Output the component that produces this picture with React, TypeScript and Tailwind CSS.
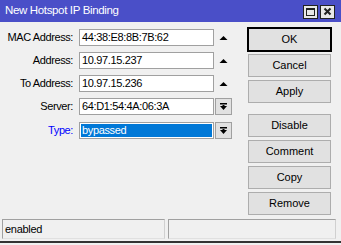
import React from "react";

const font = { fontFamily: '"Liberation Sans", Arial, sans-serif' };

function UpArrow() {
  return (
    <svg width="17" height="17" viewBox="0 0 17 17">
      <polygon points="4.5,11 8.5,7 12.5,11" fill="#000" />
    </svg>
  );
}

function DropIcon() {
  return (
    <svg width="9" height="9" viewBox="0 0 9 9">
      <rect x="1" y="1" width="7" height="1.5" fill="#000" />
      <polygon points="1,4 8,4 4.5,8" fill="#000" />
      <rect x="3.5" y="3" width="2" height="2" fill="#000" />
    </svg>
  );
}

function Row({
  label,
  value,
  blue,
  selected,
  extra,
}: {
  label: string;
  value: string;
  blue?: boolean;
  selected?: boolean;
  extra: "up" | "drop";
}) {
  return (
    <div className="flex items-center h-[17px]">
      <div
        className={`w-[73px] text-right text-[11px] leading-[17px] tracking-[-0.4px] ${
          blue ? "text-[#0000ff]" : "text-black"
        }`}
      >
        {label}
      </div>
      <div className="ml-[6px] w-[135px] h-[17px] border border-[#a0a0a0] bg-white px-[1px] flex items-center">
        <div
          className={`text-[11px] leading-[13px] tracking-[-0.35px] ${
            selected ? "bg-[#0078d7] text-white w-full h-[13px]" : "text-black"
          } pl-[1px]`}
        >
          {value}
        </div>
      </div>
      {extra === "up" ? (
        <div className="ml-[1px] w-[17px] h-[17px] flex items-center justify-center">
          <UpArrow />
        </div>
      ) : (
        <div className="ml-[1px] w-[17px] h-[17px] border border-[#a0a0a0] bg-[#e1e1e1] flex items-center justify-center">
          <DropIcon />
        </div>
      )}
    </div>
  );
}

function Btn({ label, ok }: { label: string; ok?: boolean }) {
  return (
    <div
      className={`w-[83px] h-[23px] flex items-center justify-center bg-[#e1e1e1] border text-[11px] text-black ${
        ok ? "border-black outline outline-1 outline-black" : "border-[#adadad]"
      }`}
    >
      {label}
    </div>
  );
}

export default function App() {
  return (
    <div className="w-[341px] h-[245px] bg-[#f0f0f0] flex flex-col overflow-hidden" style={font}>
      <div className="h-[22px] bg-[#4a4fc8] flex items-center pl-[5px] pr-[6px]">
        <div className="text-white text-[11.5px] tracking-[-0.35px] flex-1">New Hotspot IP Binding</div>
        <div className="flex gap-[2px] mt-[1px]">
          <div className="w-[15px] h-[14px] border border-[#222] bg-[#e8e8e8] flex items-center justify-center">
            <div className="w-[9px] h-[8px] border border-[#222] border-t-2" />
          </div>
          <div className="w-[15px] h-[14px] border border-[#222] bg-[#e8e8e8] flex items-center justify-center">
            <svg width="9" height="9" viewBox="0 0 9 9">
              <path d="M1.5 1.5 L7.5 7.5 M7.5 1.5 L1.5 7.5" stroke="#222" strokeWidth="2" />
            </svg>
          </div>
        </div>
      </div>
      <div className="flex-1 flex">
        <div className="pt-[7px] flex flex-col gap-[6px] w-[248px]">
          <Row label="MAC Address:" value="44:38:E8:8B:7B:62" extra="up" />
          <Row label="Address:" value="10.97.15.237" extra="up" />
          <Row label="To Address:" value="10.97.15.236" extra="up" />
          <Row label="Server:" value="64:D1:54:4A:06:3A" extra="drop" />
          <div className="mt-[1px]">
            <Row label="Type:" value="bypassed" blue selected extra="drop" />
          </div>
        </div>
        <div className="pt-[6px] flex flex-col gap-[3px]">
          <Btn label="OK" ok />
          <Btn label="Cancel" />
          <Btn label="Apply" />
          <div className="h-[5px]" />
          <Btn label="Disable" />
          <Btn label="Comment" />
          <Btn label="Copy" />
          <Btn label="Remove" />
        </div>
      </div>
      <div className="h-[20px] mx-[2px] flex gap-[3px]">
        <div className="w-[163px] h-full border border-[#a0a0a0] border-b-[#e0e0e0] border-r-[#d0d0d0] text-[11px] leading-[18px] pl-[2px] tracking-[-0.3px]">
          enabled
        </div>
        <div className="w-[168px] h-full border border-[#a0a0a0] border-b-[#e0e0e0] border-r-[#d0d0d0]" />
      </div>
      <div className="mt-[2px] h-[2px] bg-[#333]" />
      <div className="h-[2px]" />
    </div>
  );
}
